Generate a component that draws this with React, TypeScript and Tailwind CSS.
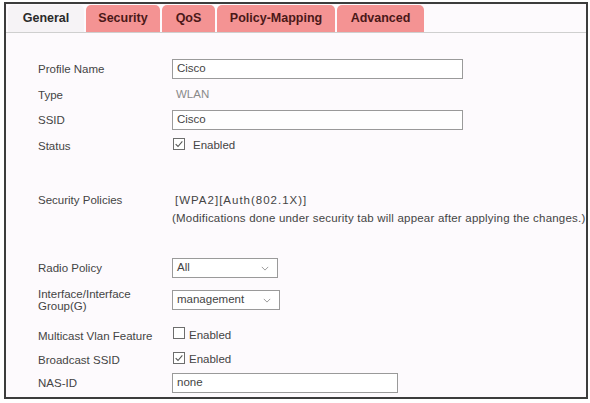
import React from "react";

const tabs = [
  { name: "General", w: "w-[76px]", active: true },
  { name: "Security", w: "w-[74px]" },
  { name: "QoS", w: "w-[53px]" },
  { name: "Policy-Mapping", w: "w-[118px]" },
  { name: "Advanced", w: "w-[87px]" },
];

const Check = ({ checked }: { checked?: boolean }) => (
  <span className="inline-flex h-[12px] w-[12px] items-center justify-center border border-[#6d6d6d] bg-white">
    {checked && (
      <svg viewBox="0 0 12 12" className="h-[10px] w-[10px]">
        <path d="M2 6.2 L4.8 9 L10 2.8" fill="none" stroke="#555" strokeWidth="1.3" />
      </svg>
    )}
  </span>
);

const Select = ({ value, w }: { value: string; w: string }) => (
  <div className={`flex h-[20px] ${w} items-center justify-between border border-[#9a9a9a] bg-white pl-[4px] pr-[8px]`}>
    <span>{value}</span>
    <svg viewBox="0 0 10 6" className="h-[5px] w-[8px]">
      <path d="M1 1 L5 5 L9 1" fill="none" stroke="#999" strokeWidth="1.2" />
    </svg>
  </div>
);

const Input = ({ value, w }: { value: string; w: string }) => (
  <div className={`flex h-[20px] ${w} items-center border border-[#9a9a9a] bg-white px-[4px]`}>{value}</div>
);

const Row = ({ label, children, cls }: { label: React.ReactNode; children: React.ReactNode; cls: string }) => (
  <div className={`flex items-center ${cls}`}>
    <div className="w-[134px] leading-[12px]">{label}</div>
    <div className="flex items-center">{children}</div>
  </div>
);

export default function App() {
  return (
    <div className="h-[403px] w-[590px] bg-white pl-[4px] pt-[2px] font-['Liberation_Sans',Arial,sans-serif] text-[11.5px] text-[#444]">
      <div className="flex h-[397px] w-[584px] flex-col border-2 border-[#3c3c3c] bg-[#fdfafd]">
        <div className="flex h-[29px] items-end gap-[2px] border-b border-[#cfcfcf] pl-[2px] pr-[4px]">
          {tabs.map((t) => (
            <div
              key={t.name}
              className={`flex h-[27px] ${t.w} items-center justify-center rounded-t-[5px] text-[12.5px] font-bold ${
                t.active ? "bg-[#f6f3f6] text-[#2a2a2a]" : "bg-[#f49393] text-[#4a1818]"
              }`}
            >
              {t.name}
            </div>
          ))}
        </div>
        <div className="flex flex-col pl-[32px] pt-[26px]">
          <Row label="Profile Name" cls="h-[20px]">
            <Input value="Cisco" w="w-[291px]" />
          </Row>
          <Row label="Type" cls="h-[20px] mt-[6px]">
            <span className="pl-[4px] text-[#8a8a8a]">WLAN</span>
          </Row>
          <Row label="SSID" cls="h-[20px] mt-[5px]">
            <Input value="Cisco" w="w-[291px]" />
          </Row>
          <Row label="Status" cls="h-[20px] mt-[6px]">
            <span className="ml-[1px]"><Check checked /></span>
            <span className="ml-[8px]">Enabled</span>
          </Row>
          <div className="mt-[35px] flex">
            <div className="w-[134px] pt-[3px] leading-[12px]">Security Policies</div>
            <div className="flex flex-col leading-[18px]">
              <span className="pl-[3px] tracking-[1px]">[WPA2][Auth(802.1X)]</span>
              <span className="whitespace-nowrap tracking-[0.2px]">(Modifications done under security tab will appear after applying the changes.)</span>
            </div>
          </div>
          <Row label="Radio Policy" cls="h-[20px] mt-[31px]">
            <Select value="All" w="w-[106px]" />
          </Row>
          <Row label={<>Interface/Interface<br />Group(G)</>} cls="h-[20px] mt-[12px]">
            <Select value="management" w="w-[108px]" />
          </Row>
          <Row label="Multicast Vlan Feature" cls="h-[20px] mt-[16px]">
            <span className="ml-[1px]"><Check /></span>
            <span className="ml-[4px]">Enabled</span>
          </Row>
          <Row label="Broadcast SSID" cls="h-[20px] mt-[4px]">
            <span className="ml-[1px]"><Check checked /></span>
            <span className="ml-[4px]">Enabled</span>
          </Row>
          <Row label="NAS-ID" cls="h-[20px] mt-[3px]">
            <Input value="none" w="w-[226px]" />
          </Row>
        </div>
      </div>
    </div>
  );
}
